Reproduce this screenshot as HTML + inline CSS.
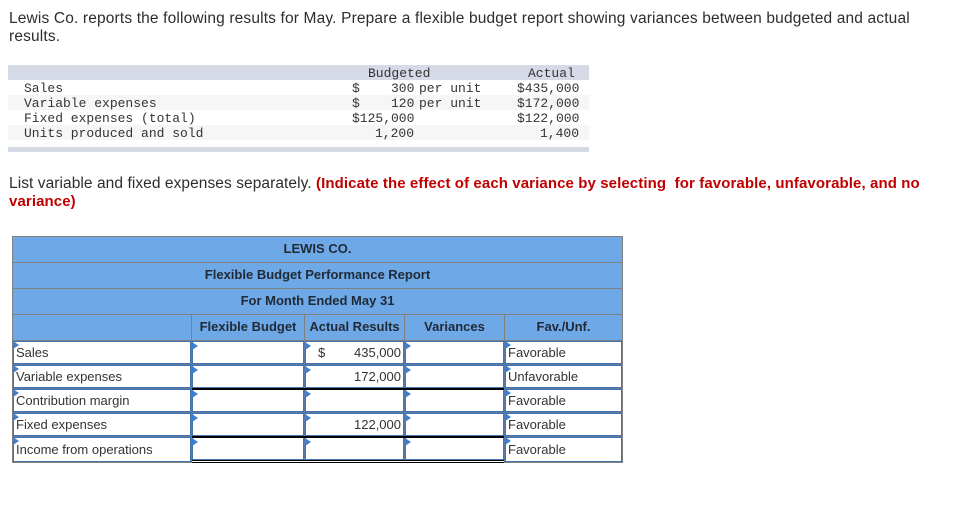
<!DOCTYPE html>
<html><head><meta charset="utf-8"><style>
html,body{margin:0;padding:0;background:#fff}
body{width:968px;height:523px;position:relative;overflow:hidden;font-family:"Liberation Sans",sans-serif}
div{position:absolute;white-space:pre}
.t{font-size:15.5px;color:#2d2d2d;line-height:18px;height:18px}
.r{color:#c00000;font-weight:bold;font-size:15px}
.m{font-family:"Liberation Mono",monospace;font-size:13px;line-height:15px;height:15px;color:#333}
.b{background:#d6dae6}
.h{background:#6fa8e6}
.g{background:#808080}
.c{font-weight:bold;font-size:13px;color:#1f2a36;line-height:26px;height:26px;text-align:center}
.i{background:#fff;border:1px solid #4473ae;box-sizing:border-box}
.l{font-size:13px;color:#333;line-height:16px;height:16px}
.n{font-size:13px;color:#333;line-height:16px;height:16px;left:341px;width:60px;text-align:right}
.k{background:#000;height:2px}
.a{width:0;height:0;border-left:6px solid #3b7fd0;border-top:4px solid transparent;border-bottom:4px solid transparent}
</style></head><body>
<div class="t" style="left:9px;top:10px;letter-spacing:.155px">Lewis Co. reports the following results for May. Prepare a flexible budget report showing variances between budgeted and actual</div>
<div class="t" style="left:9px;top:28px;letter-spacing:.155px">results.</div>

<div class="b" style="left:8px;top:65px;width:581px;height:15px"></div>
<div style="left:8px;top:95px;width:581px;height:15px;background:#f6f6f6"></div>
<div style="left:8px;top:125px;width:581px;height:15px;background:#f6f6f6"></div>
<div class="b" style="left:8px;top:147px;width:581px;height:5px"></div>

<div class="m" style="left:368px;top:66px">Budgeted</div>
<div class="m" style="left:528px;top:66px">Actual</div>
<div class="m" style="left:24px;top:81px">Sales</div>
<div class="m" style="left:352px;top:81px">$</div>
<div class="m" style="left:391px;top:81px">300</div>
<div class="m" style="left:419px;top:81px">per unit</div>
<div class="m" style="left:517px;top:81px">$435,000</div>
<div class="m" style="left:24px;top:96px">Variable expenses</div>
<div class="m" style="left:352px;top:96px">$</div>
<div class="m" style="left:391px;top:96px">120</div>
<div class="m" style="left:419px;top:96px">per unit</div>
<div class="m" style="left:517px;top:96px">$172,000</div>
<div class="m" style="left:24px;top:111px">Fixed expenses (total)</div>
<div class="m" style="left:352px;top:111px">$125,000</div>
<div class="m" style="left:517px;top:111px">$122,000</div>
<div class="m" style="left:24px;top:126px">Units produced and sold</div>
<div class="m" style="left:375px;top:126px">1,200</div>
<div class="m" style="left:540px;top:126px">1,400</div>

<div class="t" style="left:9px;top:175px;letter-spacing:.07px">List variable and fixed expenses separately. <span class="r" style="letter-spacing:.1px">(Indicate the effect of each variance by selecting  for favorable, unfavorable, and no</span></div>
<div class="t r" style="left:9px;top:193px;letter-spacing:.1px">variance)</div>

<div class="g" style="left:12px;top:236px;width:611px;height:227px"></div>
<div class="h" style="left:13px;top:237px;width:609px;height:25px"></div>
<div class="h" style="left:13px;top:263px;width:609px;height:25px"></div>
<div class="h" style="left:13px;top:289px;width:609px;height:25px"></div>
<div class="h" style="left:13px;top:315px;width:178px;height:25px"></div>
<div class="h" style="left:192px;top:315px;width:112px;height:25px"></div>
<div class="h" style="left:305px;top:315px;width:99px;height:25px"></div>
<div class="h" style="left:405px;top:315px;width:99px;height:25px"></div>
<div class="h" style="left:505px;top:315px;width:117px;height:25px"></div>

<div class="c" style="left:13px;top:236px;width:609px">LEWIS CO.</div>
<div class="c" style="left:13px;top:262px;width:609px">Flexible Budget Performance Report</div>
<div class="c" style="left:13px;top:288px;width:609px">For Month Ended May 31</div>
<div class="c" style="left:192px;top:314px;width:112px">Flexible Budget</div>
<div class="c" style="left:305px;top:314px;width:99px">Actual Results</div>
<div class="c" style="left:405px;top:314px;width:99px">Variances</div>
<div class="c" style="left:505px;top:314px;width:117px">Fav./Unf.</div>

<!-- blue-grey grid behind the input cells -->
<div style="left:13px;top:341px;width:609px;height:121px;background:#5c7ba3"></div>

<!-- row 1 -->
<div class="i" style="left:13px;top:341px;width:178px;height:23px"></div><div class="i" style="left:192px;top:341px;width:112px;height:23px"></div><div class="i" style="left:305px;top:341px;width:99px;height:23px"></div><div class="i" style="left:405px;top:341px;width:99px;height:23px"></div><div class="i" style="left:505px;top:341px;width:117px;height:23px"></div>
<!-- row 2 -->
<div class="i" style="left:13px;top:365px;width:178px;height:23px"></div><div class="i" style="left:192px;top:365px;width:112px;height:23px"></div><div class="i" style="left:305px;top:365px;width:99px;height:23px"></div><div class="i" style="left:405px;top:365px;width:99px;height:23px"></div><div class="i" style="left:505px;top:365px;width:117px;height:23px"></div>
<!-- row 3 -->
<div class="i" style="left:13px;top:389px;width:178px;height:23px"></div><div class="i" style="left:192px;top:389px;width:112px;height:23px"></div><div class="i" style="left:305px;top:389px;width:99px;height:23px"></div><div class="i" style="left:405px;top:389px;width:99px;height:23px"></div><div class="i" style="left:505px;top:389px;width:117px;height:23px"></div>
<!-- row 4 -->
<div class="i" style="left:13px;top:413px;width:178px;height:23px"></div><div class="i" style="left:192px;top:413px;width:112px;height:23px"></div><div class="i" style="left:305px;top:413px;width:99px;height:23px"></div><div class="i" style="left:405px;top:413px;width:99px;height:23px"></div><div class="i" style="left:505px;top:413px;width:117px;height:23px"></div>
<!-- row 5 -->
<div class="i" style="left:13px;top:437px;width:178px;height:25px"></div><div class="i" style="left:192px;top:437px;width:112px;height:23px"></div><div class="i" style="left:305px;top:437px;width:99px;height:23px"></div><div class="i" style="left:405px;top:437px;width:99px;height:23px"></div><div class="i" style="left:505px;top:437px;width:117px;height:25px"></div>

<!-- black rules -->
<div class="k" style="left:192px;top:388px;width:312px"></div>
<div class="k" style="left:192px;top:436px;width:312px"></div>
<div style="left:192px;top:460px;width:312px;height:3px;background:#fff"></div>
<div style="left:192px;top:460px;width:312px;height:1px;background:#000"></div>
<div style="left:192px;top:462px;width:312px;height:1px;background:#000"></div>

<!-- labels -->
<div class="l" style="left:16px;top:345px">Sales</div>
<div class="l" style="left:16px;top:369px">Variable expenses</div>
<div class="l" style="left:16px;top:393px">Contribution margin</div>
<div class="l" style="left:16px;top:417px">Fixed expenses</div>
<div class="l" style="left:16px;top:442px">Income from operations</div>
<div class="l" style="left:318px;top:345px">$</div>
<div class="n" style="top:345px">435,000</div>
<div class="n" style="top:369px">172,000</div>
<div class="n" style="top:417px">122,000</div>
<div class="l" style="left:508px;top:345px">Favorable</div>
<div class="l" style="left:508px;top:369px">Unfavorable</div>
<div class="l" style="left:508px;top:393px">Favorable</div>
<div class="l" style="left:508px;top:417px">Favorable</div>
<div class="l" style="left:508px;top:442px">Favorable</div>

<!-- markers -->
<div class="a" style="left:13px;top:341px"></div><div class="a" style="left:192px;top:342px"></div><div class="a" style="left:305px;top:342px"></div><div class="a" style="left:405px;top:342px"></div><div class="a" style="left:505px;top:341px"></div>
<div class="a" style="left:13px;top:365px"></div><div class="a" style="left:192px;top:366px"></div><div class="a" style="left:305px;top:366px"></div><div class="a" style="left:405px;top:366px"></div><div class="a" style="left:505px;top:365px"></div>
<div class="a" style="left:13px;top:389px"></div><div class="a" style="left:192px;top:390px"></div><div class="a" style="left:305px;top:390px"></div><div class="a" style="left:405px;top:390px"></div><div class="a" style="left:505px;top:389px"></div>
<div class="a" style="left:13px;top:413px"></div><div class="a" style="left:192px;top:414px"></div><div class="a" style="left:305px;top:414px"></div><div class="a" style="left:405px;top:414px"></div><div class="a" style="left:505px;top:413px"></div>
<div class="a" style="left:13px;top:437px"></div><div class="a" style="left:192px;top:438px"></div><div class="a" style="left:305px;top:438px"></div><div class="a" style="left:405px;top:438px"></div><div class="a" style="left:505px;top:437px"></div>
</body></html>
